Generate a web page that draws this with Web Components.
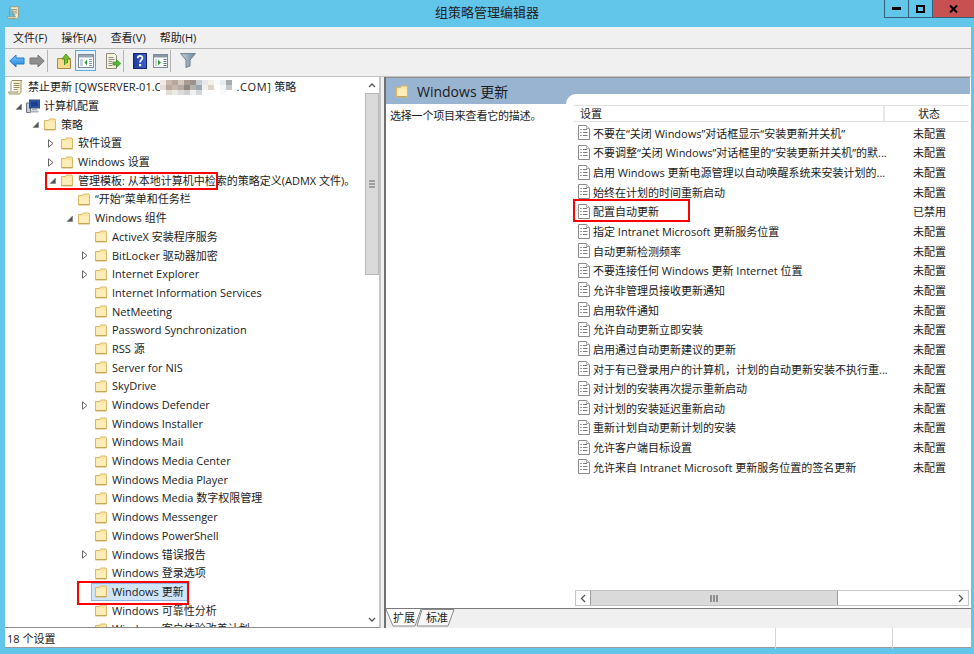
<!DOCTYPE html>
<html lang="zh">
<head>
<meta charset="utf-8">
<title>组策略管理编辑器</title>
<style>
html,body{margin:0;padding:0;height:654px;overflow:hidden;background:#62c6ea}
body{font:11px "Open Sans","Noto Sans CJK SC",sans-serif;color:#1a1a1a}
</style>
</head>
<body>
<gp-window>
  <gp-titlebar slot="title">组策略管理编辑器</gp-titlebar>
  <gp-menubar slot="menu"><span>文件(F)</span><span>操作(A)</span><span>查看(V)</span><span>帮助(H)</span></gp-menubar>
  <gp-toolbar slot="tools"></gp-toolbar>
  <gp-tree slot="tree">
    <tree-row d="0" icon="scroll">禁止更新 [QWSERVER-01.C<gp-mosaic></gp-mosaic><span style="letter-spacing:.6px">.COM]</span> 策略</tree-row>
    <tree-row d="1" arrow="open" icon="pc">计算机配置</tree-row>
    <tree-row d="2" arrow="open">策略</tree-row>
    <tree-row d="3" arrow="closed">软件设置</tree-row>
    <tree-row d="3" arrow="closed">Windows 设置</tree-row>
    <tree-row d="3" arrow="open">管理模板: 从本地计算机中检索的策略定义(ADMX 文件)。</tree-row>
    <tree-row d="4">“开始”菜单和任务栏</tree-row>
    <tree-row d="4" arrow="open">Windows 组件</tree-row>
    <tree-row d="5">ActiveX 安装程序服务</tree-row>
    <tree-row d="5" arrow="closed">BitLocker 驱动器加密</tree-row>
    <tree-row d="5" arrow="closed">Internet Explorer</tree-row>
    <tree-row d="5">Internet Information Services</tree-row>
    <tree-row d="5">NetMeeting</tree-row>
    <tree-row d="5">Password Synchronization</tree-row>
    <tree-row d="5">RSS 源</tree-row>
    <tree-row d="5">Server for NIS</tree-row>
    <tree-row d="5">SkyDrive</tree-row>
    <tree-row d="5" arrow="closed">Windows Defender</tree-row>
    <tree-row d="5">Windows Installer</tree-row>
    <tree-row d="5">Windows Mail</tree-row>
    <tree-row d="5">Windows Media Center</tree-row>
    <tree-row d="5">Windows Media Player</tree-row>
    <tree-row d="5">Windows Media 数字权限管理</tree-row>
    <tree-row d="5">Windows Messenger</tree-row>
    <tree-row d="5">Windows PowerShell</tree-row>
    <tree-row d="5" arrow="closed">Windows 错误报告</tree-row>
    <tree-row d="5">Windows 登录选项</tree-row>
    <tree-row d="5" selected>Windows 更新</tree-row>
    <tree-row d="5">Windows 可靠性分析</tree-row>
    <tree-row d="5">Windows 客户体验改善计划</tree-row>
  </gp-tree>
  <gp-detail slot="detail">
    <setting-row status="未配置">不要在“关闭 Windows”对话框显示“安装更新并关机”</setting-row>
    <setting-row status="未配置">不要调整“关闭 Windows”对话框里的“安装更新并关机”的默...</setting-row>
    <setting-row status="未配置">启用 Windows 更新电源管理以自动唤醒系统来安装计划的...</setting-row>
    <setting-row status="未配置">始终在计划的时间重新启动</setting-row>
    <setting-row status="已禁用">配置自动更新</setting-row>
    <setting-row status="未配置">指定 Intranet Microsoft 更新服务位置</setting-row>
    <setting-row status="未配置">自动更新检测频率</setting-row>
    <setting-row status="未配置">不要连接任何 Windows 更新 Internet 位置</setting-row>
    <setting-row status="未配置">允许非管理员接收更新通知</setting-row>
    <setting-row status="未配置">启用软件通知</setting-row>
    <setting-row status="未配置">允许自动更新立即安装</setting-row>
    <setting-row status="未配置">启用通过自动更新建议的更新</setting-row>
    <setting-row status="未配置">对于有已登录用户的计算机，计划的自动更新安装不执行重...</setting-row>
    <setting-row status="未配置">对计划的安装再次提示重新启动</setting-row>
    <setting-row status="未配置">对计划的安装延迟重新启动</setting-row>
    <setting-row status="未配置">重新计划自动更新计划的安装</setting-row>
    <setting-row status="未配置">允许客户端目标设置</setting-row>
    <setting-row status="未配置">允许来自 Intranet Microsoft 更新服务位置的签名更新</setting-row>
  </gp-detail>
  <gp-statusbar slot="status">18 个设置</gp-statusbar>
  <gp-mark slot="marks" style="left:45px;top:172px;width:173px;height:18px"></gp-mark>
  <gp-mark slot="marks" style="left:77px;top:581px;width:112px;height:24px"></gp-mark>
  <gp-mark slot="marks" style="left:573px;top:199px;width:117px;height:23px"></gp-mark>
</gp-window>
<script>
const FOLDER=`<svg width="14" height="13" viewBox="0 0 14 13"><path d="M1.5 2.500h4l1-1.500h5.500l.5 1.500v9.500h-11z" fill="#fbe6a6" stroke="#d9b868"/><path d="M2.500 4h9v7.500h-9z" fill="#fdeeb9"/><path d="M2 11.500h10" stroke="#c9a556"/></svg>`;
const SCROLL=`<svg width="16" height="16" viewBox="0 0 16 16"><path d="M4 1.500h10c-1 1-1 2-1 3v8c0 1.500-1 2.500-2 2.500H2c-1 0-1.500-1-1.500-2h8c0 0 .5 1 1 0V12" fill="#f6efd2" stroke="#9a8e67"/><path d="M4 1.500c-1 1-1 2-1 3V12M5.500 4.500h6M5.500 6.500h6M5.500 8.500h6M5.500 10.500h4" fill="none" stroke="#9a8e67"/></svg>`;
const PC=`<svg width="14" height="14" viewBox="0 0 14 14"><path d="M0.500 4h4v9.500h-4z" fill="#c6ccd6" stroke="#6a7484"/><rect x="3.500" y="1" width="10" height="8" fill="#2f5fb5" stroke="#3b4a66"/><rect x="5" y="2.500" width="7" height="5" fill="#1c3f8f"/><path d="M6 10h5v1H6zM4.500 11.500h8v2h-8z" fill="#a9b1bf"/></svg>`;
const DOC=`<svg width="12" height="15" viewBox="0 0 12 15"><path d="M.5.500h8l3 3v11H.500z" fill="#fff" stroke="#8b8b8b"/><path d="M8.500.500v3h3" fill="#eee" stroke="#aaa"/><path d="M2.500 4.500h1M2.500 7.500h1M2.500 10.500h1" stroke="#333"/><path d="M5 4.500h4M5 7.500h4.500M5 10.500h4.500" stroke="#7d7d7d"/></svg>`;
const OPEN=`<svg width="7" height="7" viewBox="0 0 7 7"><path d="M6.500 1v5.500H1z" fill="#555" stroke="#777" stroke-width=".6"/></svg>`;
const CLOSED=`<svg width="6" height="9" viewBox="0 0 6 9"><path d="M.5.800 5 4.500.5 8.200z" fill="#fff" stroke="#666"/></svg>`;

class Base extends HTMLElement{
  render(html){ this.attachShadow({mode:"open"}).innerHTML=html; }
}
customElements.define("gp-window",class extends Base{connectedCallback(){this.render(`<style>
:host{display:flex;flex-direction:column;width:974px;height:654px;position:relative}
.client{flex:1;display:flex;flex-direction:column;margin:0 3px 6px 5px;min-height:0;background:#f0f0f0}
.main{height:551px;display:flex;min-height:0}
.left{width:376px;display:flex}
.split{width:3px;background:#f0f0f0}
.right{flex:1;display:flex;min-width:0}
</style>
<slot name="title"></slot>
<div class="client">
<slot name="menu"></slot>
<slot name="tools"></slot>
<div class="main"><div class="left"><slot name="tree"></slot></div><div class="split"></div><div class="right"><slot name="detail"></slot></div></div>
<slot name="status"></slot>
</div>
<slot name="marks"></slot>`)}});

customElements.define("gp-titlebar",class extends Base{connectedCallback(){this.render(`<style>
:host{display:flex;height:27px;position:relative;justify-content:center;font-size:13px;color:#222;flex:none}
.t{line-height:25px}
.i{position:absolute;left:7px;top:5px;display:block}
.b{position:absolute;right:0;top:0;display:flex;height:18px}
.b div{box-sizing:border-box;height:18px;border:solid #35627a;border-width:0 0 1px 1px;display:flex;align-items:center;justify-content:center}
.min,.max{width:24px;background:#62c6ea}
.cl{width:42px;background:#c75050}
</style>
<svg class="i" width="14" height="15" viewBox="0 0 16 16">${SCROLL.replace(/<\/?svg[^>]*>/g,"")}</svg>
<span class="t"><slot></slot></span>
<div class="b">
<div class="min"><svg width="9" height="3"><rect width="9" height="3" fill="#000"/></svg></div>
<div class="max"><svg width="9" height="8"><rect x="1" y="1" width="7" height="6" fill="none" stroke="#000" stroke-width="2"/></svg></div>
<div class="cl"><svg width="9" height="8" viewBox="0 0 9 8"><path d="M1 .5 8 7.500M8 .5 1 7.500" stroke="#000" stroke-width="2"/></svg></div>
</div>`)}});

customElements.define("gp-menubar",class extends Base{connectedCallback(){this.render(`<style>
:host{display:flex;box-sizing:border-box;padding-left:8px;gap:14px;line-height:21px;border-bottom:1px solid #b9b9b9;height:22px;flex:none;color:#1a1a1a}
</style><slot></slot>`)}});

customElements.define("gp-toolbar",class extends Base{connectedCallback(){
this.render(`<style>
:host{display:flex;height:28px;box-sizing:border-box;padding:1px 0 0 2px;border-bottom:1px solid #c2c2c2;flex:none}
.btn{width:20px;height:21px;display:flex;align-items:center;justify-content:center;box-sizing:border-box;flex:none}
.sep{width:1px;height:22px;background:#b4b4b4;margin-right:6px;flex:none}
.sel{width:21px;border:1.5px solid #58ade0;background:#e6f2fa}
</style>
<div class="btn"><svg width="16" height="14" viewBox="0 0 16 14"><defs><linearGradient id="b" x1="0" y1="0" x2="0" y2="1"><stop offset="0" stop-color="#7cc8f8"/><stop offset="1" stop-color="#1f7fdc"/></linearGradient></defs><path d="M.8 7 7 1v3h8v6H7v3z" fill="url(#b)" stroke="#2a7cc9"/></svg></div>
<div class="btn"><svg width="16" height="14" viewBox="0 0 16 14"><path d="M15.200 7 9 1v3H1v6h8v3z" fill="#8f8f8f" stroke="#777"/></svg></div>
<div class="sep"></div>
<div class="btn"><svg width="15" height="16" viewBox="0 0 15 16"><path d="M.5 5.500h13v10H.500z" fill="#f5d98c" stroke="#a98a45"/><path d="M7.500 12V6H5l4-5 4 5h-2.500v4" fill="#7ac02c" stroke="#4f8f18"/></svg></div>
<div class="btn sel" style="margin-left:1px"><svg width="16" height="14" viewBox="0 0 16 14"><rect x=".5" y=".5" width="15" height="13" fill="#fff" stroke="#7d8a99"/><rect x="1" y="1" width="14" height="2.500" fill="#9aa5b2"/><rect x="2" y="5" width="3" height="7" fill="#c9d1da"/><path d="M9 5.500v6L6.500 8.500z" fill="#2f9e3a"/><path d="M11 5.500h3M11 7.500h3M11 9.500h3M11 11.500h3" stroke="#8a95a3"/></svg></div>
<div class="btn" style="margin-left:7px"><svg width="16" height="16" viewBox="0 0 16 16"><path d="M1.500.5h8l2 2v13h-10z" fill="#f7f3dd" stroke="#8d8a78"/><path d="M3.500 4.500h5M3.500 6.500h6M3.500 8.500h4M3.500 10.500h4M3.500 12.500h4" stroke="#8c8c8c"/><path d="M8 9h3.500V6.500L15.800 10.500l-4.300 4V12H8z" fill="#59b53c" stroke="#3e8f2a" stroke-width=".7"/></svg></div>
<div class="sep"></div>
<div class="btn"><svg width="14" height="16" viewBox="0 0 14 16"><defs><linearGradient id="h" x1="0" y1="0" x2="1" y2="0"><stop offset="0" stop-color="#1f3a9a"/><stop offset="1" stop-color="#3b63cf"/></linearGradient></defs><rect x=".5" y=".5" width="13" height="15" fill="url(#h)" stroke="#16256b"/><path d="M4.800 5.200c0-3 4.600-3 4.600-.2 0 2-2.300 2-2.300 4.500" fill="none" stroke="#fff" stroke-width="1.800"/><rect x="6" y="11" width="2.200" height="2.200" fill="#fff"/></svg></div>
<div class="btn"><svg width="15" height="14" viewBox="0 0 15 14"><rect x=".5" y=".5" width="14" height="13" fill="#fff" stroke="#7d8a99"/><rect x="1" y="1" width="13" height="2.500" fill="#8c97a5"/><path d="M5 5.500v6L8 8.500z" fill="#2f9e3a"/><rect x="2" y="5" width="2" height="7" fill="#c9d1da"/><path d="M10.500 5.500h3M10.500 7.500h3M10.500 9.500h3M10.500 11.500h3" stroke="#5d6875"/></svg></div>
<div class="sep" style="margin-right:7px"></div>
<div class="btn"><svg width="16" height="15" viewBox="0 0 16 15"><defs><linearGradient id="f" x1="0" y1="0" x2="1" y2="0"><stop offset="0" stop-color="#c6d2dd"/><stop offset="1" stop-color="#6c8499"/></linearGradient></defs><path d="M.6.600h14.800L10 7v6l-4 1.500V7z" fill="url(#f)" stroke="#6d8092"/></svg></div>`)}});

customElements.define("gp-scrollbar",class extends Base{connectedCallback(){this.render(`<style>
:host{display:flex;flex-direction:column;width:14px;flex:none;background:#fff;height:100%}
.btn{height:16px;display:flex;align-items:center;justify-content:center;flex:none;background:#fff}
.thumb{height:182px;flex:none;box-sizing:border-box;background:#dadada;border:1px solid #b8b8b8;display:flex;align-items:center;justify-content:center}
.track{flex:1}
</style>
<div class="btn"><svg width="8" height="5" viewBox="0 0 8 5"><path d="M1 4 4 1l3 3" fill="none" stroke="#555" stroke-width="1.300"/></svg></div>
<div class="thumb"><svg width="6" height="8"><path d="M0 1h6M0 4h6M0 7h6" stroke="#606060" stroke-width="1.200"/></svg></div>
<div class="track"></div>
<div class="btn"><svg width="8" height="5" viewBox="0 0 8 5"><path d="M1 1l3 3 3-3" fill="none" stroke="#555" stroke-width="1.300"/></svg></div>`)}});

customElements.define("gp-tree",class extends Base{connectedCallback(){this.render(`<style>
:host{display:flex;flex:1;min-width:0;height:100%;background:#fff;border-right:2px solid #c4c4c4;border-bottom:1px solid #8c8c8c;box-sizing:border-box}
.list{flex:1;min-width:0;overflow:hidden;padding-top:1px}
</style><div class="list"><slot></slot></div><gp-scrollbar></gp-scrollbar>`)}});

customElements.define("tree-row",class extends Base{connectedCallback(){
const d=+this.getAttribute("d");const a=this.getAttribute("arrow");const ic=this.getAttribute("icon");
const icon=ic==="scroll"?SCROLL:ic==="pc"?PC:FOLDER;
const arrow=a==="open"?OPEN:a==="closed"?CLOSED:"";
const pad=d===0?1:d*17-7;
this.render(`<style>
:host{display:flex;height:18.7px;align-items:center;white-space:nowrap;padding-left:${pad}px}
.a{width:${d===0?0:9}px;flex:none;display:flex;align-items:center;margin-left:${a==="closed"?-1:0}px;padding-right:${a==="closed"?1:0}px}
.l{display:flex;align-items:center;gap:4px;padding:0 2px;height:18px;box-sizing:border-box;line-height:18px}
.l svg{flex:none}
:host([selected]) .l{background:#cfe5f9;border:1px solid #8fb8e6;margin-left:-1px;padding-right:3px}
</style><span class="a">${arrow}</span><span class="l">${icon}<span><slot></slot></span></span>`)}});

customElements.define("gp-mosaic",class extends Base{connectedCallback(){
const c=["#efe9e2","#c9b8ad","#b8a79c","#d3c9bf","#a89a90","#9a928c","#c8cdd0","#e6e8ea","#f4efe9","#fafafa","#e8ecef","#a7abb0",
"#e2ded9","#b9a89b","#c6b8ac","#b7aaa0","#8e8782","#b7b3af","#9aa7ae","#f0efed","#dcd3c9","#fff","#f6f6f6","#c4c7ca",
"#fff","#e3ddd7","#efe9e3","#dcdcdc","#cfcfcf","#f1f1f1","#d3d8db","#fff","#fff","#fff","#fafafa","#fff"];
this.render(`<style>:host{display:inline-grid;grid-template-columns:repeat(12,6px);grid-auto-rows:5px;vertical-align:middle;margin:-2px 5px 0 -2px}i{display:block}</style>`+c.map(x=>`<i style="background:${x}"></i>`).join(""))}});

customElements.define("gp-detail",class extends Base{connectedCallback(){this.render(`<style>
:host{display:grid;grid-template-columns:180px 1fr;grid-template-rows:1fr 20px;flex:1;min-width:0;height:100%;box-sizing:border-box;border-left:2px solid #707070;background:#fff;position:relative}
.leftcol{display:flex;flex-direction:column;min-height:0;position:relative}
.hd{height:27px;background:#99b4d1;border-top:1px solid #8d8d8d;box-sizing:border-box;display:flex;align-items:center;gap:8px;padding-left:9px;font-size:14px;white-space:nowrap}
.desc{padding:4px 0 0 4px;line-height:16px;letter-spacing:-.2px}
.rightcol{min-width:0;display:flex;flex-direction:column;background:linear-gradient(#99b4d1 27px,#fff 27px);border-top:1px solid #8d8d8d;box-sizing:border-box;padding-top:16px;min-height:0;margin-right:1px}
.panel{flex:1;min-height:0;background:#fff;border-radius:10px 0 0 0;display:flex;flex-direction:column;padding:11px 1px 0 8px}
.cols{display:grid;grid-template-columns:311px 1fr;height:17px;line-height:16px;border:solid #e2e2e2;border-width:1px 0;box-sizing:border-box;flex:none;margin-bottom:2px}
.cols span:first-child{padding-left:6px;border-right:2px solid #e6e6e6}
.cols span:last-child{padding-left:33px}
.rows{flex:1;min-height:0;overflow:hidden}
.hs{height:16px;flex:none;display:flex;box-sizing:border-box;border:1px solid #c4c4c4;margin:0 0 2px 1px}
.hs .b{width:14px;display:flex;align-items:center;justify-content:center;flex:none}
.hs .th{width:248px;background:#dadada;border:solid #9c9c9c;border-width:0 1px;box-sizing:border-box;display:flex;align-items:center;justify-content:center}
.hs .tr{flex:1}
.tabs{grid-column:1/3;height:20px;background:#f0f0f0;border-top:1px solid #7a7a7a;box-sizing:border-box;padding-left:7px;display:flex;gap:11px;position:relative;line-height:17px;white-space:nowrap}
.tabs svg{position:absolute;left:0;top:0}
.tabs span{position:relative}
</style>
<div class="leftcol"><div class="hd">${FOLDER}<span>Windows 更新</span></div><div class="desc">选择一个项目来查看它的描述。</div></div>
<div class="rightcol"><div class="panel">
<div class="cols"><span>设置</span><span>状态</span></div>
<div class="rows"><slot></slot></div>
<div class="hs"><div class="b"><svg width="6" height="9"><path d="M5 1 1.500 4.500 5 8" fill="none" stroke="#555" stroke-width="1.300"/></svg></div><div class="th"><svg width="8" height="7"><path d="M1 0v7M4 0v7M7 0v7" stroke="#606060" stroke-width="1.200"/></svg></div><div class="tr"></div><div class="b"><svg width="6" height="9"><path d="M1 1l3.500 3.500L1 8" fill="none" stroke="#555" stroke-width="1.300"/></svg></div></div>
</div></div>
<div class="tabs"><svg width="72" height="19"><path d="M31 17 36 .5h32L62 17z" fill="#f7f7f7" stroke="#8a8a8a"/><path d="M0 0l7 17h22l6-17" fill="#fff" stroke="#8a8a8a"/></svg><span>扩展</span><span>标准</span></div>`)}});

customElements.define("setting-row",class extends Base{connectedCallback(){this.render(`<style>
:host{display:grid;grid-template-columns:335px 1fr;height:19.65px;box-sizing:border-box;padding:0 0 2px 4px;align-items:center;white-space:nowrap}
.n{display:flex;align-items:center;gap:3px;overflow:hidden}
.n svg{flex:none}
</style><span class="n">${DOC}<span><slot></slot></span></span><span class="s">${this.getAttribute("status")}</span>`)}});

customElements.define("gp-statusbar",class extends Base{connectedCallback(){this.render(`<style>
:host{display:grid;grid-template-columns:771px 117px 1fr;height:20px;flex:none;background:#fff;border-bottom:1px solid #9a9a9a;box-sizing:border-box;line-height:21px}
div{border-right:1px solid #d4d4d4;padding-left:2px}
div:last-child{border:0}
</style><div><slot></slot></div><div></div><div></div>`)}});

customElements.define("gp-mark",class extends Base{connectedCallback(){this.render(`<style>
:host{position:absolute;box-sizing:border-box;border:2px solid #f00;display:block;pointer-events:none}
</style>`)}});
</script>
</body>
</html>
